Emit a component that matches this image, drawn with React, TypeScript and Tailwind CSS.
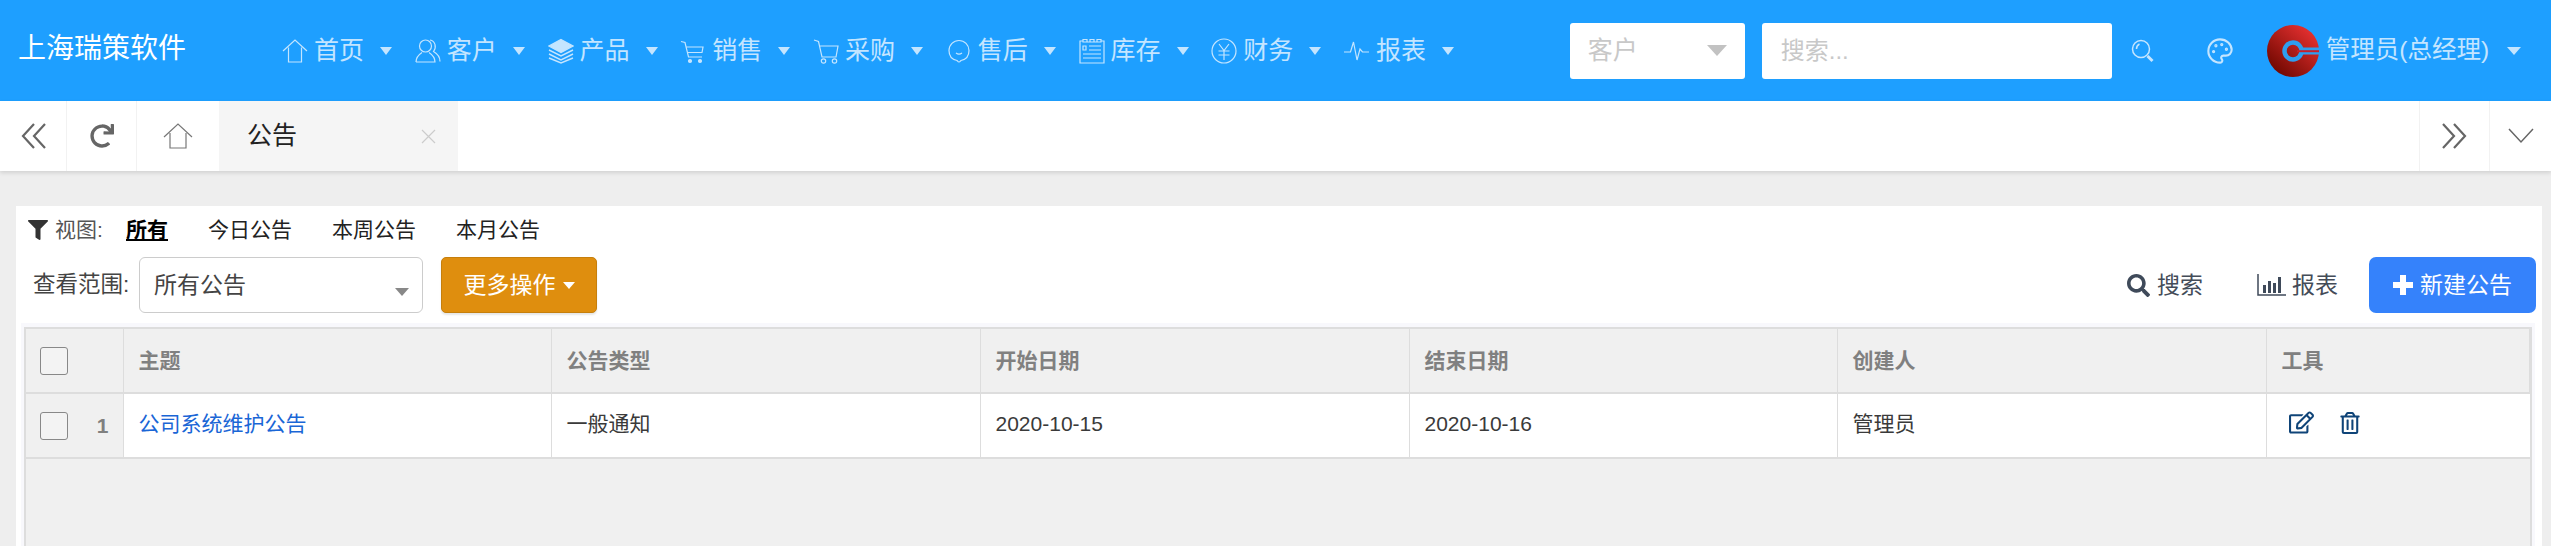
import type { ReactNode } from 'react';
import { FaFilter, FaRedo, FaRegEdit, FaRegTrashAlt, FaSearch } from 'react-icons/fa';
import { Palette } from 'lucide-react';

function NavIcon({ children }: { children: ReactNode }) {
  return (
    <svg width="26" height="26" viewBox="0 0 26 26" fill="none" stroke="currentColor" strokeWidth="1.2" className="shrink-0">
      {children}
    </svg>
  );
}

const navItems: { label: string; icon: ReactNode }[] = [
  {
    label: '首页',
    icon: <path d="M1 13 13 2l12 11M6.5 9.5V24h13V9.5" />,
  },
  {
    label: '客户',
    icon: (
      <>
        <circle cx="10.5" cy="8" r="6" />
        <path d="M1 24c0-5 3-7.5 6-9.5M14 14.500c3 2 6 4.500 6 9.500H1M15 2c5 1 7 7 3.500 11.500 3.500 2 6.500 5 6.500 10" />
      </>
    ),
  },
  {
    label: '产品',
    icon: (
      <>
        <path d="M13 1.500 25 8l-12 6.500L1 8z" fill="currentColor" />
        <path d="m1 12 12 6 12-6M1 16l12 6 12-6M1 20l12 5 12-5" strokeWidth="1.400" />
      </>
    ),
  },
  {
    label: '销售',
    icon: (
      <>
        <path d="M1 3.500 5 4.500 8.500 19H22M6.500 9H23l-1 5.500H8" />
        <circle cx="10" cy="23" r="1.500" fill="currentColor" />
        <circle cx="20" cy="23" r="1.500" fill="currentColor" />
      </>
    ),
  },
  {
    label: '采购',
    icon: (
      <>
        <path d="M1 2l4.500 1.500L9 19h14l2-11H6.800" />
        <circle cx="10.500" cy="23" r="2.200" />
        <circle cx="21.500" cy="23" r="2.200" />
      </>
    ),
  },
  {
    label: '售后',
    icon: (
      <>
        <path d="M13 24c-1 0-1.500-1-2-1.500C6 21.500 3 17.500 3 12.500 3 7 7.500 2.500 13 2.500S23 7 23 12.500c0 5-3 9-8 10-.5.500-1 1.500-2 1.500z" />
        <path d="M10 15c2 1.500 4 1.500 6 0" />
      </>
    ),
  },
  {
    label: '库存',
    icon: (
      <>
        <path d="M4 3H1v22h24V3h-3M4 1.500h4V4H4zM11 1.500h4V4h-4zM18 1.500h4V4h-4zM8 4h3M15 4h3" />
        <path d="M4 8h3v4H4zM10 8h12M10 12h12M4 16h18M4 20h18" />
      </>
    ),
  },
  {
    label: '财务',
    icon: (
      <>
        <circle cx="13" cy="13" r="12" />
        <path d="M8 6l5 6.500L18 6M7.500 13h11M7.500 17h11M13 12.500V22" />
      </>
    ),
  },
  {
    label: '报表',
    icon: <path d="M0 14h6.500L9.500 4l3.500 18 3-11 2.500 3H25" />,
  },
];

function NavItem({ label, icon }: { label: string; icon: ReactNode }) {
  return (
    <div className="flex w-[132.75px] items-center text-[#c4e5ff]">
      <NavIcon>{icon}</NavIcon>
      <span className="ml-[6px] w-[49px] whitespace-nowrap text-[25px]">{label}</span>
      <span className="ml-[17px] h-0 w-0 border-x-[6.500px] border-t-[8px] border-x-transparent border-t-[#c4e5ff]" />
    </div>
  );
}

function Avatar() {
  return (
    <svg width="52" height="52" viewBox="0 0 52 52" className="shrink-0">
      <defs>
        <linearGradient id="logo" x1="0.850" y1="0.100" x2="0.150" y2="0.900">
          <stop offset="0" stopColor="#e53030" />
          <stop offset="1" stopColor="#700800" />
        </linearGradient>
      </defs>
      <circle cx="26" cy="26" r="26" fill="url(#logo)" />
      <circle cx="26" cy="26" r="8.500" fill="none" stroke="#2f9eef" strokeWidth="4.500" />
      <path d="M33 22.500h19v7H33z" fill="#2f9eef" />
      <path d="M30 25.200h22v2H30z" fill="#c8202a" />
    </svg>
  );
}

function DoubleChevron({ flip }: { flip?: boolean }) {
  return (
    <svg width="27" height="26" viewBox="0 0 27 26" fill="none" stroke="#666" strokeWidth="2.200" className={flip ? '-scale-x-100' : ''}>
      <path d="M14 1 3 13l11 12M25 1 14 13l11 12" />
    </svg>
  );
}

function Checkbox() {
  return <span className="block h-[28px] w-[28px] rounded-[3px] border border-[#888] bg-[#f3f3f3]" />;
}

function ChartIcon() {
  return (
    <svg width="29" height="22" viewBox="0 0 29 22" fill="none" stroke="#3f4a5a">
      <path d="M1 0v21h28" strokeWidth="1.500" />
      <path d="M6 11h3v8H6zM11 7h3v12h-3zM16 9h3v10h-3zM21 3h3v16h-3z" fill="#3f4a5a" strokeWidth="0" />
    </svg>
  );
}

const columns = ['主题', '公告类型', '开始日期', '结束日期', '创建人', '工具'];
const cellClass = 'border-r border-b-2 border-[#ddd] px-[15px] text-left';
const bodyCellClass = `${cellClass} pb-[3px] text-[#3a3a3a]`;

export default function App() {
  return (
    <div className="h-[546px] overflow-hidden bg-[#eee] text-[21px] text-[#333] [font-family:'Liberation_Sans','Noto_Sans_CJK_SC',sans-serif]">
      {/* Top bar */}
      <header className="flex h-[101px] items-center bg-[#1e9fff]">
        <div className="w-[282px] pb-[4px] pl-[18px] text-[28px] text-white">上海瑞策软件</div>
        <nav className="flex">
          {navItems.map((item) => (
            <NavItem key={item.label} label={item.label} icon={item.icon} />
          ))}
        </nav>
        <div className="ml-[93px] flex h-[56px] w-[175px] items-center justify-between rounded-[3px] bg-white pl-[18px] pr-[18px] text-[25px] text-[#c8c8c8]">
          客户
          <span className="h-0 w-0 border-x-[10px] border-t-[11px] border-x-transparent border-t-[#c2c2c2]" />
        </div>
        <div className="ml-[17px] flex h-[56px] w-[350px] items-center rounded-[3px] bg-white pl-[19px] text-[24px] text-[#c8c8c8]">
          搜索...
        </div>
        <svg width="24" height="24" viewBox="0 0 24 24" fill="none" stroke="#c4e5ff" strokeWidth="1.500" className="ml-[19px]">
          <circle cx="10" cy="10" r="8.500" />
          <path d="M5.500 10c0-2 1-4 3-5" />
          <path d="m16.500 17 5 5" strokeWidth="3" />
        </svg>
        <Palette size={28} strokeWidth={1.800} className="ml-[51px] text-[#c4e5ff]" />
        <div className="ml-[33px]">
          <Avatar />
        </div>
        <span className="ml-[7px] whitespace-nowrap text-[24.500px] text-[#c4e5ff]">管理员(总经理)</span>
        <span className="ml-[18px] h-0 w-0 border-x-[7px] border-t-[8px] border-x-transparent border-t-[#c4e5ff]" />
      </header>

      {/* Tabs */}
      <div className="flex h-[70px] bg-white shadow-[0_2px_4px_rgba(0,0,0,0.12)]">
        <div className="flex w-[67px] items-center justify-center border-r border-[#f2f2f2]">
          <DoubleChevron />
        </div>
        <div className="flex w-[70px] items-center justify-center border-r border-[#f2f2f2]">
          <FaRedo size={24} className="text-[#666]" />
        </div>
        <div className="flex w-[82px] items-center justify-center">
          <svg width="30" height="26" viewBox="0 0 30 26" fill="none" stroke="#777" strokeWidth="1.200">
            <path d="M1 14 15 1l14 13M7 10v15h16V10" />
          </svg>
        </div>
        <div className="flex w-[239px] items-center justify-between bg-[#f5f5f5] pl-[28px] pr-[22px]">
          <span className="text-[25px] text-[#222]">公告</span>
          <svg width="15" height="15" viewBox="0 0 15 15" stroke="#ccc" strokeWidth="1.200">
            <path d="m1 1 13 13M14 1 1 14" />
          </svg>
        </div>
        <div className="flex-1" />
        <div className="flex w-[70px] items-center justify-center border-l border-[#f2f2f2]">
          <DoubleChevron flip />
        </div>
        <div className="flex w-[62px] items-center justify-center border-l border-[#f2f2f2]">
          <svg width="26" height="16" viewBox="0 0 26 16" fill="none" stroke="#666" strokeWidth="1.500">
            <path d="m1 1 12 13L25 1" />
          </svg>
        </div>
      </div>

      {/* Content */}
      <main className="ml-[16px] mr-[9px] mt-[35px] h-[340px] bg-white pt-[6px]">
        <div className="flex h-[35px] items-center pl-[12px] text-[#222]">
          <FaFilter size={20} className="text-[#333]" />
          <span className="ml-[7px] w-[51px] whitespace-nowrap text-[#555]">视图:</span>
          <span className="ml-[20px] font-bold text-black underline">所有</span>
          <span className="ml-[40px]">今日公告</span>
          <span className="ml-[40px]">本周公告</span>
          <span className="ml-[40px]">本月公告</span>
        </div>
        <div className="mt-[10px] flex h-[56px] items-center pl-[17px] pr-[6px]">
          <span className="w-[97px] whitespace-nowrap text-[22.500px] text-[#444]">查看范围:</span>
          <div className="relative ml-[9px] flex h-[56px] w-[284px] items-center rounded-[6px] border border-[#ccc] pl-[14px] text-[23px] text-[#444]">
            所有公告
            <span className="absolute right-[13px] top-[30px] h-0 w-0 border-x-[7px] border-t-[8px] border-x-transparent border-t-[#888]" />
          </div>
          <div className="ml-[18px] flex h-[56px] w-[156px] items-center justify-center rounded-[5px] border border-[#c67f0c] bg-[#df8e0e] text-[23px] text-white shadow-[0_2px_2px_rgba(0,0,0,0.1)]">
            更多操作
            <span className="ml-[7px] h-0 w-0 border-x-[6.500px] border-t-[7px] border-x-transparent border-t-white" />
          </div>
          <div className="flex-1" />
          <FaSearch size={23} className="text-[#3f4a5a]" />
          <span className="ml-[7px] text-[23px] text-[#444c58]">搜索</span>
          <span className="ml-[54px]">
            <ChartIcon />
          </span>
          <span className="ml-[6px] text-[23px] text-[#444c58]">报表</span>
          <div className="ml-[31px] flex h-[56px] w-[167px] items-center justify-center rounded-[7px] bg-[#3582fb] text-[23px] text-white">
            <svg width="20" height="20" viewBox="0 0 20 20" stroke="white" strokeWidth="6">
              <path d="M10 0v20M0 10h20" />
            </svg>
            <span className="ml-[7px]">新建公告</span>
          </div>
        </div>

        {/* Table */}
        <div className="ml-[5px] mt-[10px] h-[240px] w-[2514px] bg-[#f8f8fc] pl-[3px] pr-[3px] pt-[4px]">
          <div className="h-full border-x-2 border-t-2 border-[#ddd] bg-[#f0f0f0]">
            <table className="w-full table-fixed border-collapse">
              <colgroup>
                <col className="w-[97px]" />
                <col className="w-[428px]" />
                <col className="w-[429px]" />
                <col className="w-[429px]" />
                <col className="w-[428px]" />
                <col className="w-[429px]" />
                <col />
              </colgroup>
              <thead>
                <tr className="h-[64px] bg-[#f0f0f0]">
                  <th className={`${cellClass} !px-0`}>
                    <div className="pl-[14px]">
                      <Checkbox />
                    </div>
                  </th>
                  {columns.map((c) => (
                    <th key={c} className={`${cellClass} font-bold text-[#808080]`}>
                      {c}
                    </th>
                  ))}
                </tr>
              </thead>
              <tbody>
                <tr className="h-[65px] bg-white">
                  <td className={`${cellClass} bg-[#f0f0f0] !px-0`}>
                    <div className="flex items-center justify-between pl-[14px] pr-[14px]">
                      <Checkbox />
                      <span className="font-bold text-[#808080]">1</span>
                    </div>
                  </td>
                  <td className={`${cellClass} pb-[3px] text-[#1a66d6]`}>公司系统维护公告</td>
                  <td className={bodyCellClass}>一般通知</td>
                  <td className={bodyCellClass}>2020-10-15</td>
                  <td className={bodyCellClass}>2020-10-16</td>
                  <td className={bodyCellClass}>管理员</td>
                  <td className={`${cellClass} !border-r-0`}>
                    <div className="flex items-center gap-[25px] pb-[6px] pl-[7px] text-[#0f4478]">
                      <FaRegEdit size={25} />
                      <FaRegTrashAlt size={22} />
                    </div>
                  </td>
                </tr>
              </tbody>
            </table>
          </div>
        </div>
      </main>
    </div>
  );
}
